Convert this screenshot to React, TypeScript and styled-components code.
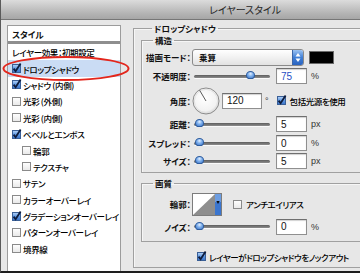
import styled, { createGlobalStyle } from "styled-components";

const GlobalStyle = createGlobalStyle`
  html, body {
    margin: 0;
    padding: 0;
    background: #fff;
  }
`;

const Window = styled.div`
  position: relative;
  width: 360px;
  height: 273px;
  box-sizing: border-box;
  overflow: hidden;
  display: flex;
  flex-direction: column;
  background: #e7e7e7;
  border-left: 1px solid #5a5a5a;
  border-bottom: 2px solid #1e1e1e;
  font-family: "Noto Sans CJK JP", "Noto Sans", sans-serif;
  font-feature-settings: "palt";
  font-size: 8.5px;
  color: #111;
`;

const TitleBar = styled.div`
  flex: none;
  height: 19px;
  display: flex;
  align-items: center;
  padding-left: 208px;
  background: linear-gradient(#dcdcdc, #b4b4b4 70%, #a6a6a6);
  border-bottom: 1px solid #767676;
  font-size: 10px;
  color: #262626;
`;

const Body = styled.div`
  flex: 1;
  display: flex;
  padding-left: 6px;
  min-height: 0;
`;

// 左側のスタイル一覧
const StyleList = styled.div`
  flex: none;
  width: 114px;
  margin-top: 5px;
  box-sizing: border-box;
  background: #fff;
  border: 1px solid #9c9c9c;
  border-bottom: none;
  display: flex;
  flex-direction: column;
`;

const ListHeader = styled.div`
  height: 15px;
  display: flex;
  align-items: center;
  padding-left: 4px;
  font-weight: 700;
  border-bottom: 3px solid #8e8e8e;
`;

const ListRow = styled.div<{ $selected?: boolean; $indent?: number }>`
  height: 16.4px;
  display: flex;
  align-items: center;
  padding-left: ${(p) => 4 + (p.$indent ?? 0)}px;
  background: ${(p) => (p.$selected ? "#cadcf4" : "transparent")};
  white-space: nowrap;
  letter-spacing: -0.35px;
  font-weight: 500;
  color: #000;
`;

const RowText = styled.span`
  margin-left: 2px;
`;

// 右側
const RightPane = styled.div`
  flex: none;
  width: 280px;
  margin-left: 12px;
  display: flex;
  flex-direction: column;
`;

const Group = styled.fieldset<{ $mt?: number; $pl?: number; $pb?: number }>`
  margin: ${(p) => p.$mt ?? 0}px 0 0 0;
  padding: 0 0 ${(p) => p.$pb ?? 0}px ${(p) => p.$pl ?? 0}px;
  border: 1px solid #a0a0a0;
  box-shadow: inset 1px 1px 0 #f6f6f6;
  min-width: 0;
  display: flex;
  flex-direction: column;
`;

const Legend = styled.legend`
  margin-left: 11px;
  padding: 0 2px;
  height: 11px;
  line-height: 11px;
  font-weight: 700;
`;

const Row = styled.div<{ $h: number; $mt?: number }>`
  height: ${(p) => p.$h}px;
  margin-top: ${(p) => p.$mt ?? 0}px;
  display: flex;
  align-items: center;
  white-space: nowrap;
`;

const Label = styled.span`
  width: 49px;
  flex: none;
  text-align: right;
  font-weight: 700;
`;

const Select = styled.div`
  margin-left: 1px;
  width: 112px;
  height: 17px;
  box-sizing: border-box;
  border: 1px solid #8a8a8a;
  border-radius: 3px;
  background: linear-gradient(#ffffff, #f1f1f1 50%, #e2e2e2);
  display: flex;
  align-items: center;
  padding-left: 6px;
  font-weight: 700;
  overflow: hidden;
`;

const SelectText = styled.span`
  flex: 1;
`;

const Stepper = styled.div`
  width: 10px;
  height: 100%;
  background: linear-gradient(#9cc3f2, #3f7fd6 50%, #2a63bf);
  border-left: 1px solid #3b66a8;
  display: flex;
  align-items: center;
  justify-content: center;
`;

const Swatch = styled.div`
  margin-left: 5px;
  width: 25px;
  height: 13px;
  box-sizing: border-box;
  background: #000;
  border: 1px solid #6a6a6a;
`;

const SliderWrap = styled.div<{ $ml?: number }>`
  position: relative;
  margin-left: ${(p) => p.$ml ?? 3}px;
  width: 76px;
  height: 10px;
  display: flex;
  align-items: center;
`;

const Track = styled.div`
  width: 100%;
  height: 3px;
  border-radius: 2px;
  background: linear-gradient(#5d5d5d, #8d8d8d);
  box-shadow: 0 1px 0 #fafafa;
`;

const Thumb = styled.div`
  position: absolute;
  top: 0px;
  width: 9px;
  height: 8px;
  margin-left: -4.5px;
  border-radius: 50% 50% 45% 45%;
  box-sizing: border-box;
  border: 1px solid #2f5d9e;
  background: radial-gradient(circle at 50% 30%, #e4f0ff, #7fb0ec 45%, #3b74c8);
`;

const NumberBox = styled.div<{ $w?: number; $ml?: number; $blue?: boolean }>`
  margin-left: ${(p) => p.$ml ?? 6}px;
  width: ${(p) => p.$w ?? 31}px;
  height: 16px;
  box-sizing: border-box;
  background: #fff;
  border: 1px solid #8f8f8f;
  border-top-color: #6f6f6f;
  box-shadow: inset 0 1px 1px rgba(0, 0, 0, 0.18);
  padding-left: 4px;
  display: flex;
  align-items: center;
  font-family: "Liberation Sans", Arial, sans-serif;
  font-size: 10px;
  color: ${(p) => (p.$blue ? "#1f4fc4" : "#111")};
`;

const Unit = styled.span<{ $ml?: number }>`
  margin-left: ${(p) => p.$ml ?? 4}px;
  font-family: "Liberation Sans", Arial, sans-serif;
  font-size: 9px;
  color: #333;
`;

const CheckText = styled.span<{ $ml?: number }>`
  margin-left: ${(p) => p.$ml ?? 4}px;
  letter-spacing: -0.45px;
  font-weight: 500;
  color: #000;
`;

const CheckBox = styled.svg<{ $ml?: number }>`
  flex: none;
  margin-left: ${(p) => p.$ml ?? 0}px;
  overflow: visible;
`;

const Ellipse = styled.svg`
  position: absolute;
  left: 0;
  top: 0;
  pointer-events: none;
`;

function Check({ on, ml, size = 9 }: { on?: boolean; ml?: number; size?: number }) {
  return (
    <CheckBox $ml={ml} width={size} height={size} viewBox="0 0 9 9">
      <defs>
        <linearGradient id="cbBlue" x1="0" y1="0" x2="0" y2="1">
          <stop offset="0" stopColor="#b9d6f8" />
          <stop offset="0.5" stopColor="#5e97e2" />
          <stop offset="1" stopColor="#3a73c9" />
        </linearGradient>
        <linearGradient id="cbWhite" x1="0" y1="0" x2="0" y2="1">
          <stop offset="0" stopColor="#ffffff" />
          <stop offset="1" stopColor="#e8e8e8" />
        </linearGradient>
      </defs>
      <rect
        x="0.5"
        y="0.5"
        width="8"
        height="8"
        fill={on ? "url(#cbBlue)" : "url(#cbWhite)"}
        stroke={on ? "#3a5f96" : "#8a8a8a"}
      />
      {on && (
        <path d="M1.6 4.6 L3.6 7.2 L8.6 -0.6" fill="none" stroke="#0e1c3c" strokeWidth="1.8" />
      )}
    </CheckBox>
  );
}

function Slider({ value, ml }: { value: number; ml?: number }) {
  return (
    <SliderWrap $ml={ml}>
      <Track />
      <Thumb style={{ left: 5 + value * 0.69 }} />
    </SliderWrap>
  );
}

function Dial() {
  return (
    <svg width="28" height="28" viewBox="0 0 28 28" style={{ marginLeft: 1 }}>
      <defs>
        <radialGradient id="dialFill" cx="0.45" cy="0.4" r="0.6">
          <stop offset="0" stopColor="#ffffff" />
          <stop offset="0.8" stopColor="#f2f2f2" />
          <stop offset="1" stopColor="#d6d6d6" />
        </radialGradient>
      </defs>
      <circle cx="14" cy="14" r="13" fill="url(#dialFill)" stroke="#8c8c8c" strokeWidth="1" />
      <circle cx="14" cy="14" r="11.6" fill="none" stroke="#e2e2e2" strokeWidth="1" />
      <line x1="14" y1="14" x2="7.6" y2="3.2" stroke="#5a5a5a" strokeWidth="1" />
    </svg>
  );
}

function Contour() {
  return (
    <svg width="30" height="23" viewBox="0 0 30 23" style={{ marginLeft: 1 }}>
      <rect x="0.5" y="0.5" width="29" height="22" fill="#fff" stroke="#7c7c7c" />
      <polygon points="1,22 23,1 23,22" fill="#8e8e8e" />
      <rect x="23" y="1" width="6" height="21" fill="#3b76cf" />
      <rect x="23" y="1" width="6" height="8" fill="#8fb9ef" opacity="0.6" />
      <polygon points="24.3,8 27.7,8 26,11" fill="#0b0b0b" />
    </svg>
  );
}

const listItems = [
  { label: "ドロップシャドウ", on: true, selected: true },
  { label: "シャドウ (内側)", on: true },
  { label: "光彩 (外側)" },
  { label: "光彩 (内側)" },
  { label: "ベベルとエンボス", on: true },
  { label: "輪郭", indent: 10 },
  { label: "テクスチャ", indent: 10 },
  { label: "サテン" },
  { label: "カラーオーバーレイ" },
  { label: "グラデーションオーバーレイ", on: true },
  { label: "パターンオーバーレイ" },
  { label: "境界線" },
];

export default function App() {
  return (
    <>
      <GlobalStyle />
      <Window>
        <TitleBar>レイヤースタイル</TitleBar>
        <Body>
          <StyleList>
            <ListHeader>スタイル</ListHeader>
            <ListRow>レイヤー効果：初期設定</ListRow>
            {listItems.map((it) => (
              <ListRow key={it.label} $selected={it.selected} $indent={it.indent}>
                <Check on={it.on} />
                <RowText>{it.label}</RowText>
              </ListRow>
            ))}
          </StyleList>

          <RightPane>
            <Group $mt={2.5} $pl={7} $pb={2}>
              <Legend>ドロップシャドウ</Legend>

              <Group $mt={1} $pb={3}>
                <Legend>構造</Legend>
                <Row $h={17} $mt={3}>
                  <Label>描画モード：</Label>
                  <Select>
                    <SelectText>乗算</SelectText>
                    <Stepper>
                      <svg width="6" height="11" viewBox="0 0 6 11">
                        <polygon points="0.5,4.5 5.5,4.5 3,1" fill="#fff" />
                        <polygon points="0.5,6.5 5.5,6.5 3,10" fill="#fff" />
                      </svg>
                    </Stepper>
                  </Select>
                  <Swatch />
                </Row>
                <Row $h={17} $mt={2}>
                  <Label>不透明度：</Label>
                  <Slider value={75} />
                  <NumberBox $blue>75</NumberBox>
                  <Unit>%</Unit>
                </Row>
                <Row $h={28} $mt={2}>
                  <Label>角度：</Label>
                  <Dial />
                  <NumberBox $w={40} $ml={2}>120</NumberBox>
                  <Unit $ml={3}>°</Unit>
                  <Check on ml={8} />
                  <CheckText>包括光源を使用</CheckText>
                </Row>
                <Row $h={16} $mt={1.5}>
                  <Label>距離：</Label>
                  <Slider value={0} />
                  <NumberBox>5</NumberBox>
                  <Unit>px</Unit>
                </Row>
                <Row $h={16} $mt={3}>
                  <Label>スプレッド：</Label>
                  <Slider value={0} />
                  <NumberBox>0</NumberBox>
                  <Unit>%</Unit>
                </Row>
                <Row $h={16} $mt={2}>
                  <Label>サイズ：</Label>
                  <Slider value={0} />
                  <NumberBox>5</NumberBox>
                  <Unit>px</Unit>
                </Row>
              </Group>

              <Group $mt={4.5} $pb={6}>
                <Legend>画質</Legend>
                <Row $h={23} $mt={4}>
                  <Label>輪郭：</Label>
                  <Contour />
                  <Check ml={11} />
                  <CheckText>アンチエイリアス</CheckText>
                </Row>
                <Row $h={16} $mt={3}>
                  <Label>ノイズ：</Label>
                  <Slider value={0} />
                  <NumberBox>0</NumberBox>
                  <Unit>%</Unit>
                </Row>
              </Group>

              <Row $h={16} $mt={7}>
                <Check on ml={56} />
                <CheckText $ml={3}>レイヤーがドロップシャドウをノックアウト</CheckText>
              </Row>
            </Group>
          </RightPane>
        </Body>
        <Ellipse width="360" height="273" viewBox="0 0 360 273">
          <ellipse cx="65" cy="68.5" rx="62.5" ry="11.5" fill="none" stroke="#e3261c" strokeWidth="2" />
        </Ellipse>
      </Window>
    </>
  );
}
